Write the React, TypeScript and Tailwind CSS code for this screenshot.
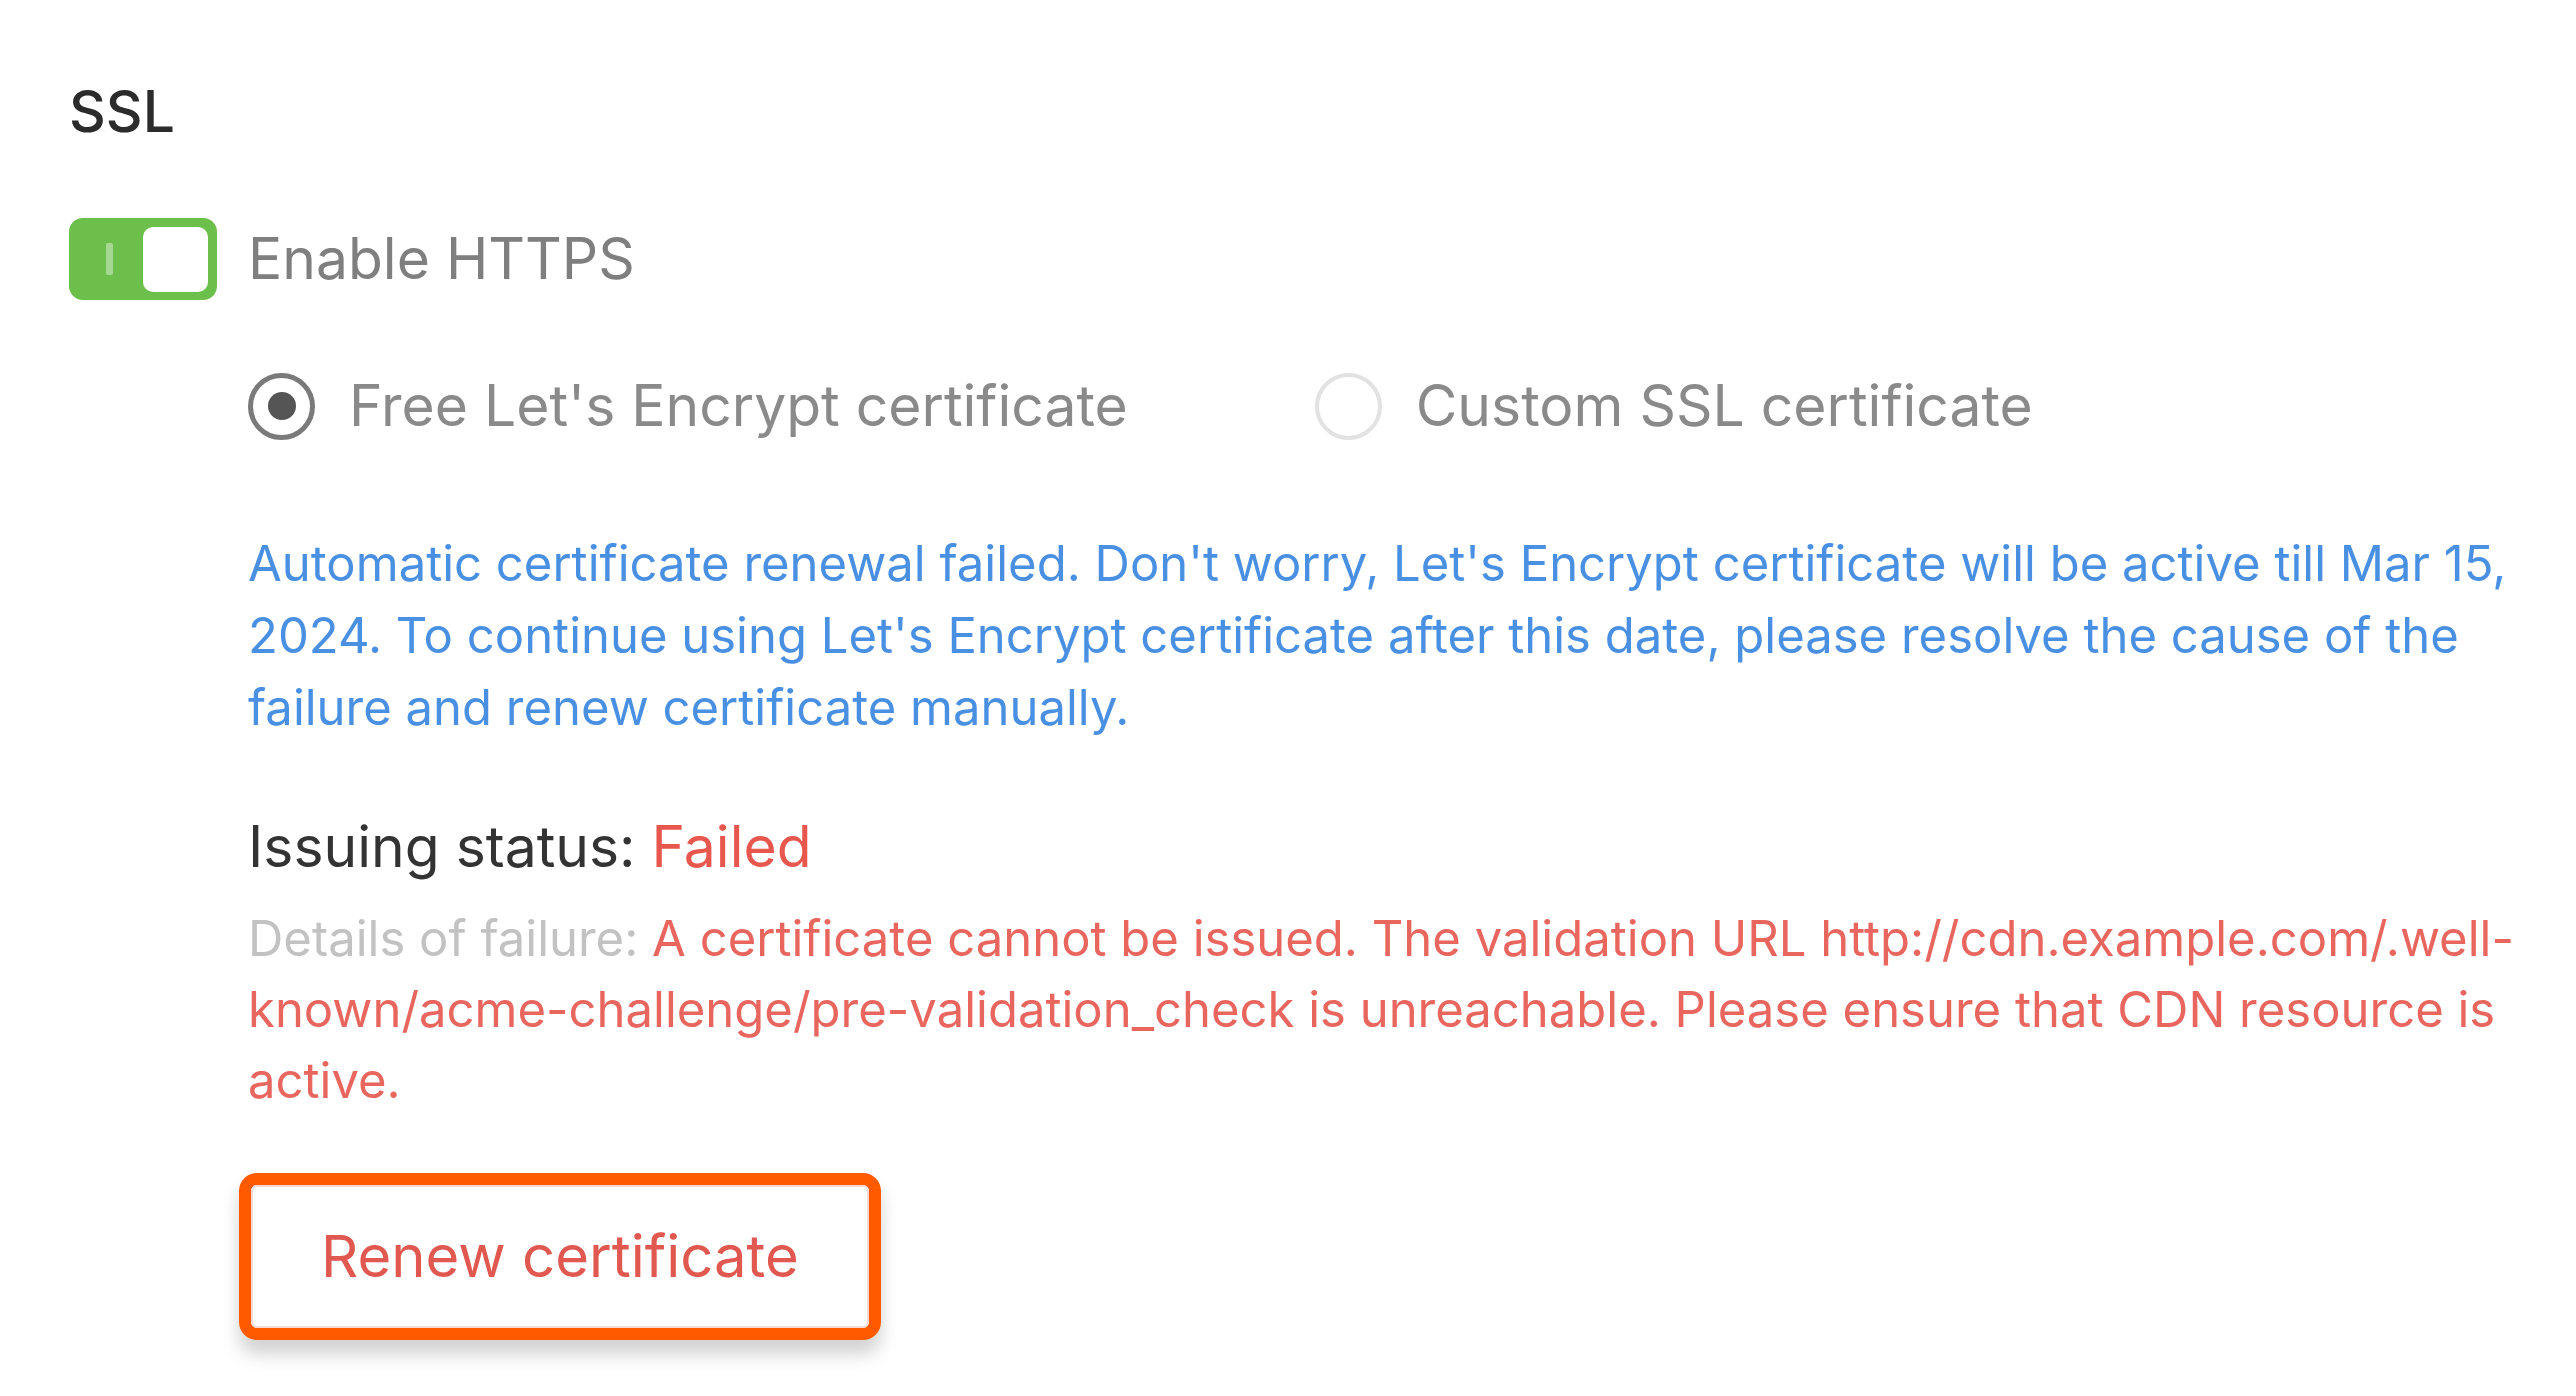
import {useState} from "react";

const font = {fontFamily: "Inter, 'Noto Sans', sans-serif"};

const Toggle = ({on, onChange}: {on: boolean; onChange: () => void}): JSX.Element => (
    <button
        type="button"
        onClick={onChange}
        className={
            on
                ? "flex items-center justify-between w-[148px] h-[82px] rounded-[14px] bg-[#6cbf4b] pl-[37px] pr-[9px] shrink-0"
                : "flex items-center justify-between w-[148px] h-[82px] rounded-[14px] bg-[#cfcfcf] pl-[37px] pr-[9px] shrink-0"
        }
    >
        <span className="w-[7px] h-[32px] rounded-[2px] bg-white/40"/>
        <span className="w-[65px] h-[65px] rounded-[10px] bg-white"/>
    </button>
);

const Radio = ({checked, label, onClick}: {checked: boolean; label: string; onClick: () => void}): JSX.Element => (
    <label onClick={onClick} className="flex items-center gap-x-[34px] cursor-pointer">
        <span
            className={
                checked
                    ? "flex items-center justify-center w-[67px] h-[67px] rounded-full border-[5px] border-[#7a7a7a] bg-white"
                    : "flex items-center justify-center w-[67px] h-[67px] rounded-full border-[4px] border-[#e2e2e2] bg-white"
            }
        >
            {checked && <span className="w-[28px] h-[28px] rounded-full bg-[#555555]"/>}
        </span>
        <span className="text-[57px] leading-[68px] text-[#8a8a8a]">{label}</span>
    </label>
);

export default function App(): JSX.Element {
    const [https, setHttps] = useState<boolean>(true);
    const [certType, setCertType] = useState<"free" | "custom">("free");

    return (
        <div className="min-h-screen bg-white pl-[69px] pt-[82px]" style={font}>
            <h3 className="text-[57px] leading-[60px] font-medium text-[#2b2b2b]">SSL</h3>

            <div className="flex items-center gap-x-[31px] mt-[76px]">
                <Toggle on={https} onChange={() => setHttps(!https)}/>
                <span className="text-[57px] leading-[82px] text-[#7f7f7f]">Enable HTTPS</span>
            </div>

            <div className="pl-[179px]">
                <div className="flex items-center gap-x-[187px] mt-[72px]">
                    <Radio
                        checked={certType == "free"}
                        label="Free Let's Encrypt certificate"
                        onClick={() => setCertType("free")}
                    />
                    <Radio
                        checked={certType == "custom"}
                        label="Custom SSL certificate"
                        onClick={() => setCertType("custom")}
                    />
                </div>

                <p className="w-[2300px] mt-[88px] text-[49px] leading-[72px] text-[#4a90e2]">
                    Automatic certificate renewal failed. Don't worry, Let's Encrypt certificate will be active till
                    Mar 15, 2024. To continue using Let's Encrypt certificate after this date, please resolve the cause
                    of the failure and renew certificate manually.
                </p>

                <p className="mt-[67px] text-[57px] leading-[72px] text-[#333333]">
                    Issuing status: <span className="text-[#e8574e]">Failed</span>
                </p>

                <p className="w-[2300px] mt-[20px] text-[49px] leading-[71px] text-[#e8665e]">
                    <span className="text-[#c2c2c2]">Details of failure:</span>{" "}
                    A certificate cannot be issued. The validation URL http://cdn.example.com/.well-known/acme-challenge/pre-validation_check
                    is unreachable. Please ensure that CDN resource is active.
                </p>

                <div className="inline-block mt-[57px] -ml-[9px] rounded-[18px] border-[12px] border-[#ff5a00] shadow-[0_14px_18px_rgba(0,0,0,0.18)]">
                    <button
                        type="button"
                        className="flex items-center h-[143px] px-[68px] bg-white rounded-[6px] border-2 border-[#f6d9d6] text-[58px] text-[#e0584f]"
                    >
                        Renew certificate
                    </button>
                </div>
            </div>
        </div>
    );
}
